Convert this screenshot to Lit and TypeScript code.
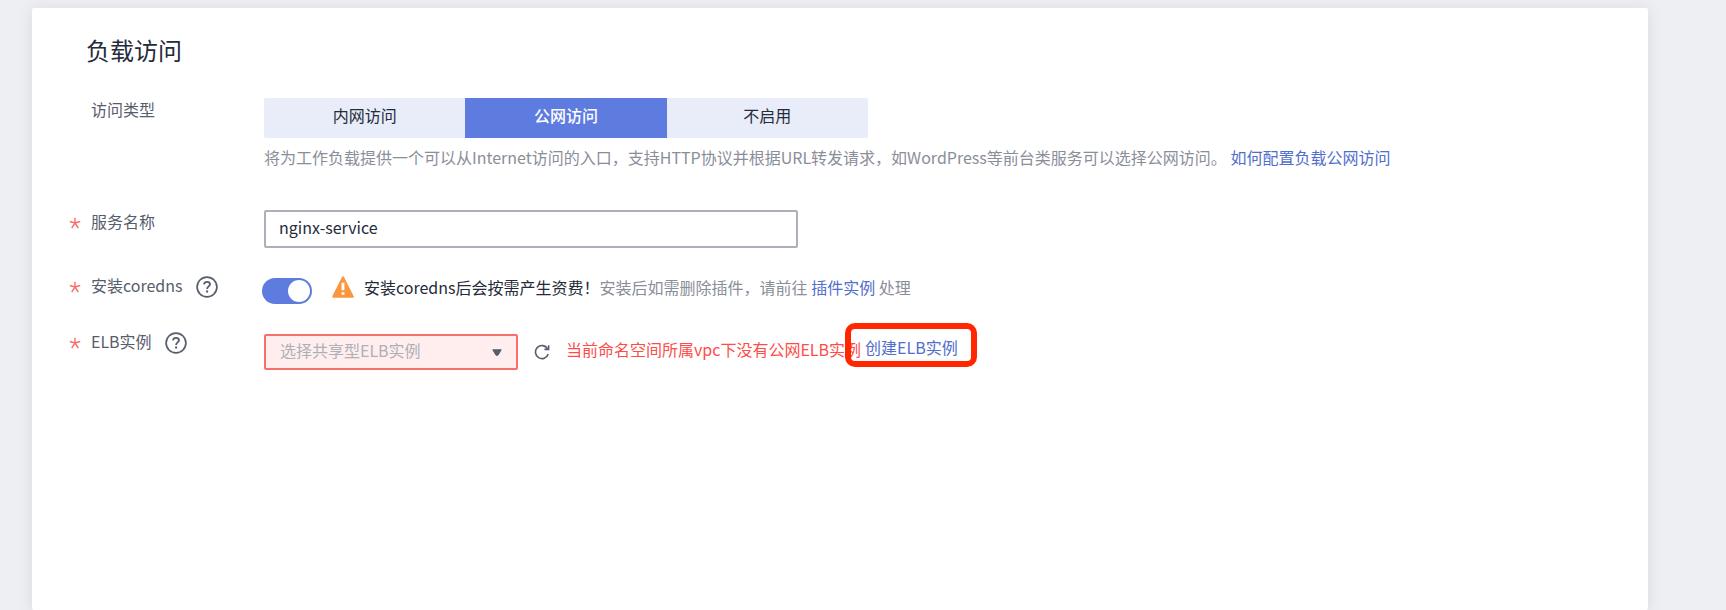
import { LitElement, html, css } from "lit";
import { customElement, property, state } from "lit/decorators.js";

@customElement("form-row")
class FormRow extends LitElement {
  @property() label = "";
  @property({ type: Boolean }) required = false;
  @property({ type: Boolean }) help = false;

  static styles = css`
    :host {
      display: grid;
      grid-template-columns: 22px 173px minmax(0, 1fr);
      align-items: start;
    }
    .star {
      width: 12px;
      height: 12px;
      margin-top: 7px;
      stroke: #f66f6a;
      stroke-width: 1.4;
      fill: none;
    }
    .label {
      display: flex;
      align-items: flex-start;
      gap: 13px;
      color: #575d6c;
      white-space: nowrap;
    }
    .help {
      display: block;
      width: 22px;
      height: 22px;
      margin: 2px 0 0;
      padding: 0;
      border: 0;
      background: none;
      color: #575d6c;
    }
    .help svg {
      display: block;
    }
  `;

  render() {
    return html`
      <span>
        ${this.required
          ? html`<svg class="star" viewBox="0 0 12 12" aria-hidden="true">
              <path d="M6 .8V6M.8 4.5 6 6l5.2-1.5M2.7 11 6 6l3.3 5" />
            </svg>`
          : null}
      </span>
      <span class="label">
        <span>${this.label}</span>
        ${this.help
          ? html`<button class="help" type="button" aria-label="${this.label}">
              <svg width="22" height="22" viewBox="0 0 22 22" fill="none" stroke="currentColor">
                <circle cx="11" cy="11" r="9.9" stroke-width="1.7" />
                <path d="M8 8.4c.2-1.7 1.4-2.6 3-2.6s3 1 3 2.5c0 2-2.9 2.2-2.9 4.6" stroke-width="1.8" />
                <path d="M11.1 14.4v2.2" stroke-width="2" />
              </svg>
            </button>`
          : null}
      </span>
      <slot></slot>
    `;
  }
}

@customElement("app-root")
class AppRoot extends LitElement {
  @state() access = 1;
  @state() coredns = true;

  static styles = css`
    :host {
      display: flex;
      box-sizing: border-box;
      min-height: 100vh;
      padding: 8px 78px 0 32px;
      background: #eeeff3;
      color: #252b3a;
      font: 16px/22px "Noto Sans CJK SC", sans-serif;
    }
    * {
      box-sizing: border-box;
    }
    button,
    input,
    select {
      font: inherit;
      color: inherit;
      margin: 0;
    }
    a {
      color: #526ecc;
      text-decoration: none;
    }
    .card {
      flex: 1;
      min-width: 0;
      padding: 24px 37px;
      background: #fff;
      border-radius: 2px;
      box-shadow: 0 2px 16px rgba(70, 75, 95, 0.12);
    }
    h1 {
      margin: 0 0 30px;
      padding-left: 17px;
      font-size: 24px;
      line-height: 36px;
      font-weight: 400;
    }
    form {
      display: flex;
      flex-direction: column;
      gap: 26px;
    }
    .tabs {
      display: grid;
      grid-template-columns: repeat(3, 1fr);
      max-width: 604px;
      border-radius: 2px;
      overflow: hidden;
      background: #e9edf9;
    }
    .tab {
      height: 40px;
      padding: 0 0 6px;
      border: 0;
      background: none;
    }
    .tab.on {
      background: #5e7ce0;
      color: #fff;
      font-weight: 500;
    }
    .desc {
      margin: 8px 0 16px;
      color: #8a8e99;
    }
    .name {
      display: block;
      width: 100%;
      max-width: 534px;
      height: 38px;
      padding: 0 13px 4px;
      border: 2px solid #adb0b8;
      border-radius: 2px;
      background: #fff;
      outline: none;
    }
    .line {
      display: flex;
      align-items: flex-start;
    }
    .coredns {
      margin-left: -2px;
      padding-top: 2px;
    }
    .switch {
      appearance: none;
      flex: none;
      display: flex;
      justify-content: flex-end;
      width: 50px;
      height: 26px;
      margin: 2px 20px 0 0;
      padding: 2px;
      border-radius: 13px;
      background: #5e7ce0;
    }
    .switch::before {
      content: "";
      width: 22px;
      height: 22px;
      border-radius: 50%;
      background: #fff;
    }
    .switch:not(:checked) {
      justify-content: flex-start;
      background: #adb0b8;
    }
    .warn {
      flex: none;
      margin-right: 10px;
    }
    .muted {
      color: #8a8e99;
    }
    .elb {
      padding-top: 4px;
    }
    .picker {
      display: grid;
      align-items: center;
      flex: 0 1 254px;
    }
    .picker > * {
      grid-area: 1 / 1;
    }
    .picker select {
      appearance: none;
      width: 100%;
      height: 36px;
      padding: 0 32px 4px 14px;
      border: 2px solid #f66f6a;
      border-radius: 2px;
      background: #ffeeed;
      color: #adb0b8;
      outline: none;
    }
    .caret {
      justify-self: end;
      margin-right: 16px;
      pointer-events: none;
    }
    .refresh {
      display: block;
      padding: 0;
      border: 0;
      margin: 10px 16px 0;
      background: none;
      color: #575d6c;
    }
    .refresh svg {
      display: block;
    }
    .error {
      padding-top: 4px;
      color: #fe4c4a;
      white-space: nowrap;
    }
    .create {
      position: relative;
      margin: 2px 0 0 4px;
      white-space: nowrap;
    }
    .create::after {
      content: "";
      position: absolute;
      inset: -13px -19px -9px -20px;
      border: 6px solid #ff2600;
      border-radius: 10px;
      pointer-events: none;
    }
  `;

  render() {
    return html`
      <main class="card">
        <h1>负载访问</h1>
        <form @submit=${(e: Event) => e.preventDefault()}>
          <form-row label="访问类型">
            <div>
              <div class="tabs" role="group" aria-label="访问类型">
                ${["内网访问", "公网访问", "不启用"].map(
                  (t, i) => html`<button
                    type="button"
                    class="tab ${i === this.access ? "on" : ""}"
                    aria-pressed=${i === this.access}
                    @click=${() => (this.access = i)}
                  >${t}</button>`
                )}
              </div>
              <p class="desc">将为工作负载提供一个可以从Internet访问的入口，支持HTTP协议并根据URL转发请求，如WordPress等前台类服务可以选择公网访问。 <a href="#">如何配置负载公网访问</a></p>
            </div>
          </form-row>

          <form-row label="服务名称" required>
            <input class="name" type="text" aria-label="服务名称" value="nginx-service" />
          </form-row>

          <form-row label="安装coredns" required help>
            <div class="line coredns">
              <input
                class="switch"
                type="checkbox"
                role="switch"
                aria-label="安装coredns"
                .checked=${this.coredns}
                @change=${(e: Event) => (this.coredns = (e.target as HTMLInputElement).checked)}
              />
              <svg class="warn" width="22" height="22" viewBox="0 0 22 22" aria-hidden="true">
                <path d="M11 1.2 20.8 20.8H1.2Z" fill="#fa9841" stroke="#fa9841" stroke-width="2" stroke-linejoin="round" />
                <path d="M9.6 6.8h2.8v7.4H9.6zM9.6 16.2h2.8v2.6H9.6z" fill="#fff" />
              </svg>
              <span>安装coredns后会按需产生资费！<span class="muted">安装后如需删除插件，请前往 <a href="#">插件实例</a> 处理</span></span>
            </div>
          </form-row>

          <form-row label="ELB实例" required help>
            <div class="line elb">
              <div class="picker">
                <select aria-label="ELB实例">
                  <option>选择共享型ELB实例</option>
                </select>
                <svg class="caret" width="10" height="7" viewBox="0 0 10 7" aria-hidden="true">
                  <path d="M.8.8h8.4L6 6.2H4Z" fill="#575d6c" stroke="#575d6c" stroke-linejoin="round" />
                </svg>
              </div>
              <button class="refresh" type="button" aria-label="刷新">
                <svg width="16" height="16" viewBox="0 0 16 16" fill="none" stroke="currentColor" stroke-width="1.6">
                  <path d="M13.6 4.8A6.5 6.5 0 1 0 14.2 10" />
                  <path d="M14.6 1.2v4.2h-4.2" />
                </svg>
              </button>
              <span class="error">当前命名空间所属vpc下没有公网ELB实例</span>
              <a class="create" href="#">创建ELB实例</a>
            </div>
          </form-row>
        </form>
      </main>
    `;
  }
}
